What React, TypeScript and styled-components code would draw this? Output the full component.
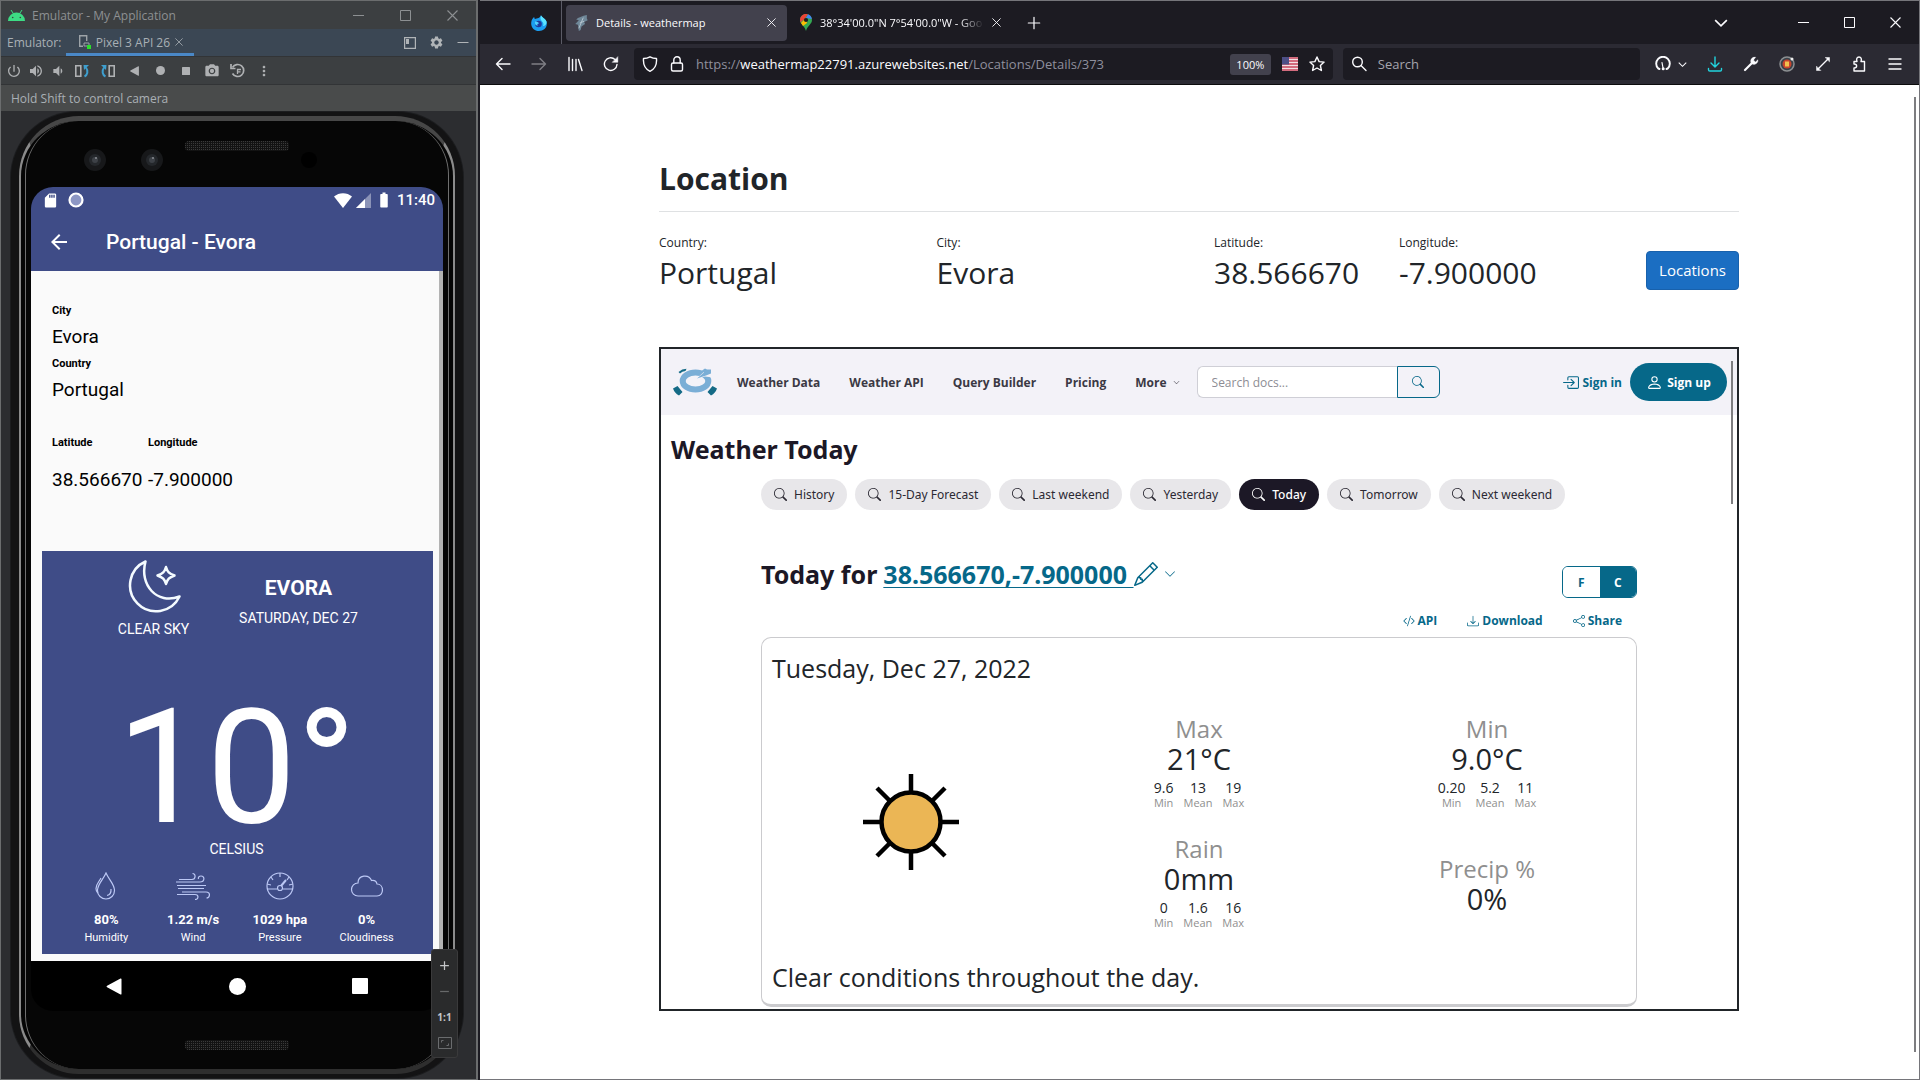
import React from "react";
import styled, { createGlobalStyle } from "styled-components";
import {
  BsSearch,
  BsPencil,
  BsCodeSlash,
  BsDownload,
  BsShare,
  BsBoxArrowInRight,
  BsPerson,
  BsChevronDown,
} from "react-icons/bs";
import {
  MdPowerSettingsNew,
  MdVolumeUp,
  MdVolumeDown,
  MdPhotoCamera,
  MdMoreVert,
  MdSettings,
  MdArrowBack,
  MdSdCard,
  MdBatteryFull,
  MdAdd,
  MdRemove,
} from "react-icons/md";

const ui = `"Open Sans", "Noto Sans", sans-serif`;
const heading = `"Noto Sans", "Open Sans", sans-serif`;
const teal = "#066889";
const indigo = "#3f4c87";

const Global = createGlobalStyle`
  *, *::before, *::after { box-sizing: border-box; }
  html, body { margin: 0; height: 100%; }
  body { background: #1c1b22; font-family: ${ui}; overflow: hidden; }
  #root { height: 100%; }
  button, input { font: inherit; color: inherit; margin: 0; padding: 0; border: 0; background: none; }
  button { display: inline-flex; align-items: center; justify-content: center; cursor: pointer; }
  h1, h2, h3, p, dl, dt, dd { margin: 0; font-weight: inherit; }
  svg { flex: none; display: block; }
`;

const Desktop = styled.div`
  display: grid;
  grid-template-columns: 1fr 3fr;
  height: 100vh;
`;

/* ---------- Emulator window ---------- */

const EmulatorWindow = styled.section`
  display: flex;
  flex-direction: column;
  margin-right: 2px;
  border: 1px solid #6b6d6e;
  border-right-width: 2px;
  background: #2c2d30;
  color: #a9b0b5;
  font-size: 12px;
  min-width: 0;
`;

const TitleBar = styled.header`
  display: flex;
  align-items: center;
  height: 28px;
  padding: 0 18px 0 7px;
  background: #3c3f41;
  color: #8d9092;
`;

const TitleText = styled.span`
  flex: 1;
  margin-left: 7px;
`;

const WindowButtons = styled.div<{ $gap: number }>`
  display: flex;
  align-items: center;
  gap: ${(p) => p.$gap}px;
`;

const EmulatorTabs = styled.div`
  display: flex;
  align-items: center;
  height: 27px;
  padding: 0 7px 0 6px;
  background: #3b4754;
`;

const DeviceTab = styled.button`
  height: 27px;
  width: 128px;
  margin-left: 5px;
  padding: 2px 0 0;
  gap: 5px;
  border-bottom: 3px solid #4a88c7;
`;

const TabTools = styled.div`
  display: flex;
  align-items: center;
  gap: 13px;
  margin-left: auto;
  color: #b0b4b7;
`;

const DeviceTools = styled.div`
  display: flex;
  align-items: center;
  height: 29px;
  padding: 0 2px;
  background: #3c3f41;
  border-top: 1px solid #323436;
  border-bottom: 1px solid #323436;
  color: #afb1b3;
`;

const ToolButton = styled.button<{ $narrow?: boolean }>`
  width: ${(p) => (p.$narrow ? 22 : 26)}px;
  height: 20px;
`;

const Hint = styled.div`
  height: 26px;
  padding-left: 10px;
  line-height: 28px;
  background: #494b4b;
`;

const DeviceArea = styled.div`
  position: relative;
  flex: 1;
  display: flex;
  min-height: 0;
  padding: 1px 13px 1px 10px;
`;

const PhoneShell = styled.div`
  flex: 1;
  display: flex;
  min-width: 0;
  padding: 4px 8px;
  border-radius: 66px;
  background: #131314;
  box-shadow: 0 0 0 1px #1c1d1f;
`;

const PhoneRim = styled.div`
  flex: 1;
  display: flex;
  min-width: 0;
  padding: 0 4px;
  border: solid #8b8b8b;
  border-width: 5px 2px;
  border-top-color: #474747;
  border-bottom-color: #2e2e2e;
  border-radius: 60px;
  background: #050505;
`;

const PhoneFace = styled.div`
  flex: 1;
  display: flex;
  flex-direction: column;
  min-width: 0;
  padding: 0 5px;
  border: solid #6f6f6f;
  border-width: 0 1px;
  border-radius: 54px;
  background: #060606;
`;

const Hardware = styled.svg`
  width: 100%;
`;

const Screen = styled.div`
  flex: 1;
  display: flex;
  flex-direction: column;
  min-height: 0;
  overflow: hidden;
  border-radius: 22px;
  background: #000;
  font-family: Roboto, sans-serif;
  color: #fff;
`;

const StatusBar = styled.div`
  display: flex;
  align-items: center;
  gap: 9px;
  height: 26px;
  padding: 0 8px 0 11px;
  background: ${indigo};
  font-size: 15px;
  font-weight: 500;
`;

const Signals = styled.div`
  display: flex;
  align-items: center;
  gap: 4px;
  margin-left: auto;
`;

const AppBar = styled.div`
  display: flex;
  align-items: center;
  gap: 35px;
  height: 58px;
  padding: 0 16px;
  background: ${indigo};
`;

const AppTitle = styled.h1`
  font-size: 21px;
  font-weight: 500;
`;

const AppBody = styled.div`
  flex: 1;
  min-height: 0;
  padding: 30px 6px 6px 11px;
  background: #fafafa;
  border-right: 4px solid #b3b3b3;
  color: #000;
`;

const PhoneDetails = styled.dl`
  padding: 0 10px;
`;

const PhoneLabel = styled.dt`
  font-size: 11px;
  font-weight: 700;
  line-height: 19px;
`;

const PhoneValue = styled.dd`
  font-size: 19px;
  line-height: 34px;
`;

const Coordinates = styled.div`
  display: grid;
  grid-template-columns: 96px 1fr;
  row-gap: 11px;
  margin: 26px 0 54px;
`;

const ForecastCard = styled.section`
  background: ${indigo};
  color: #fff;
  height: 403px;
  padding: 8px 23px 0 21px;
  font-size: 14px;
  text-align: center;
`;

const ForecastTop = styled.div`
  display: grid;
  grid-template-columns: 1fr 1fr;
  padding: 0 39px 0 18px;
`;

const Sky = styled.div`
  display: flex;
  flex-direction: column;
  align-items: center;
  line-height: 22px;
  gap: 5px;
`;

const Place = styled.div`
  padding-top: 14px;
  line-height: 30px;
  white-space: nowrap;
`;

const PlaceName = styled.h2`
  font-size: 21px;
  font-weight: 700;
`;

const Temperature = styled.p`
  margin-top: 57px;
  font-size: 160px;
  line-height: 142px;
`;

const Unit = styled.p`
  line-height: 20px;
`;

const Readings = styled.div`
  display: grid;
  grid-template-columns: repeat(4, 1fr);
  margin-top: 13px;
`;

const Reading = styled.div`
  display: flex;
  flex-direction: column;
  align-items: center;
  font-size: 11px;
  line-height: 18px;
`;

const ReadingValue = styled.strong`
  margin-top: 11px;
  font-size: 13px;
`;

const NavBar = styled.nav`
  display: flex;
  align-items: center;
  justify-content: space-between;
  height: 50px;
  padding: 0 75px;
`;

const ZoomControls = styled.div`
  position: absolute;
  right: 18px;
  bottom: 21px;
  width: 27px;
  display: grid;
  grid-template-rows: repeat(4, 26px);
  padding: 2px 0 1px;
  border-radius: 3px;
  border: 1px solid #3a3a3b;
  background: #2a2b2c;
  color: #c4c6c8;
  font-size: 10px;
  font-weight: 700;
`;

/* ---------- Browser window ---------- */

const BrowserWindow = styled.section`
  display: flex;
  flex-direction: column;
  min-width: 0;
  border: 1px solid #75757a;
  border-left: 0;
  background: #fff;
  color: #fbfbfe;
`;

const TabStrip = styled.header`
  display: flex;
  align-items: center;
  height: 43px;
  padding-right: 18px;
  background: #1c1b22;
  font-size: 11px;
`;

const PinnedTab = styled.button`
  width: 82px;
  height: 43px;
  padding-left: 36px;
  border-right: 1px solid #5b5b66;
`;

const BrowserTab = styled.div<{ $active?: boolean }>`
  display: flex;
  align-items: center;
  gap: 8px;
  width: 221px;
  height: 36px;
  margin-left: 4px;
  padding: 0 11px 0 9px;
  border-radius: 4px;
  background: ${(p) => (p.$active ? "#42414d" : "transparent")};
`;

const TabLabel = styled.span<{ $fade?: boolean }>`
  flex: 1;
  white-space: nowrap;
  mask-image: ${(p) => (p.$fade ? "linear-gradient(to right, #000 85%, transparent)" : "none")};
`;

const TabActions = styled.div`
  flex: 1;
  display: flex;
  align-items: center;
  justify-content: space-between;
  margin-left: 15px;
`;

const TabsEnd = styled.div`
  display: flex;
  align-items: center;
  gap: 70px;
`;

const Toolbar = styled.div`
  display: flex;
  align-items: center;
  height: 41px;
  padding: 0 16px 0 15px;
  background: #2b2a33;
  border-bottom: 1px solid #0c0c0d;
  font-size: 13px;
`;

const NavButtons = styled.div`
  display: flex;
  gap: 20px;
  margin-right: 15px;
`;

const Field = styled.div<{ $wide?: boolean }>`
  display: flex;
  align-items: center;
  gap: 11px;
  flex: ${(p) => (p.$wide ? 17 : 7)} 1 0;
  min-width: 0;
  height: 32px;
  padding: 0 8px;
  margin-right: 10px;
  border-radius: 4px;
  background: #1c1b22;
`;

const Address = styled.div`
  flex: 1;
  overflow: hidden;
  white-space: nowrap;
  color: #8f8f9d;
  outline: 0;
`;

const Host = styled.span`
  color: #fbfbfe;
`;

const ZoomLevel = styled.button`
  width: 41px;
  height: 21px;
  border-radius: 3px;
  background: #42414d;
  font-size: 11px;
`;

const BrowserSearch = styled.input`
  flex: 1;
  min-width: 0;
  outline: 0;
  &::placeholder { color: #a5a5ae; opacity: 1; }
`;

const Extensions = styled.div`
  display: flex;
  align-items: center;
  gap: 20px;
  margin-left: 5px;
`;

const GaugeGroup = styled.div`
  display: flex;
  align-items: center;
  justify-content: space-between;
  width: 32px;
`;

const PageArea = styled.div`
  flex: 1;
  display: flex;
  min-height: 0;
  padding: 12px 3px 27px 4px;
  color: #212529;
`;

const Page = styled.main`
  width: 90%;
  max-width: 1080px;
  margin: 0 auto;
  padding-top: 60px;
`;

const Scrollbar = styled.div<{ $height: string }>`
  width: 2px;
  height: ${(p) => p.$height};
  background: #7d7d80;
`;

const Heading = styled.h1`
  padding-bottom: 10px;
  border-bottom: 1px solid #dfe1e3;
  font-size: 30px;
  font-weight: 700;
  line-height: 44px;
`;

const LocationRow = styled.div`
  display: grid;
  grid-template-columns: repeat(12, 1fr);
  column-gap: 30px;
  padding-top: 21px;
`;

const LocationItem = styled.dl<{ $span: number }>`
  grid-column: span ${(p) => p.$span};
`;

const ItemLabel = styled.dt`
  font-size: 12px;
  line-height: 20px;
`;

const ItemValue = styled.dd`
  font-size: 30px;
  line-height: 40px;
  white-space: nowrap;
`;

const LocationsLink = styled.a`
  grid-column: span 2;
  justify-self: end;
  align-self: end;
  padding: 0 12px;
  margin-bottom: 3px;
  border: 1px solid #1861ac;
  border-radius: 4px;
  background: #1b6ec2;
  color: #fff;
  font-size: 15px;
  line-height: 37px;
  text-decoration: none;
`;

const Widget = styled.section`
  margin-top: 54px;
  padding-bottom: 2px;
  border: 2px solid #212529;
`;

const WidgetHeader = styled.header`
  display: flex;
  align-items: center;
  height: 66px;
  padding: 0 0 0 12px;
  background: #f3f2f8;
  color: #3b3944;
  font-size: 12px;
  font-weight: 700;
  white-space: nowrap;
`;

const WidgetNav = styled.nav`
  display: flex;
  gap: 29px;
  margin: 0 17px 0 20px;
`;

const NavItem = styled.a`
  display: inline-flex;
  align-items: center;
  gap: 6px;
  color: inherit;
  text-decoration: none;
`;

const DocsSearch = styled.form`
  display: flex;
  width: 243px;
  height: 32px;
  font-weight: 400;
`;

const DocsInput = styled.input`
  flex: 1;
  min-width: 0;
  padding-left: 14px;
  border: 1px solid #cfcfd6;
  border-right: 0;
  border-radius: 6px 0 0 6px;
  background: #fff;
  outline: 0;
  &::placeholder { color: #8d8d94; opacity: 1; }
`;

const DocsButton = styled.button`
  width: 43px;
  border: 1px solid ${teal};
  border-radius: 0 6px 6px 0;
  color: ${teal};
`;

const SignIn = styled.a`
  display: inline-flex;
  align-items: center;
  gap: 3px;
  margin-left: auto;
  color: ${teal};
  text-decoration: none;
`;

const SignUp = styled.button`
  gap: 4px;
  width: 97px;
  height: 38px;
  margin: 0 4px 0 8px;
  border-radius: 19px;
  background: ${teal};
  color: #fff;
`;

const WidgetScroll = styled.div`
  align-self: flex-end;
  width: 2px;
  height: 54px;
  margin-right: 4px;
  background: #7d7d80;
`;

const TitleRow = styled.div`
  display: flex;
  justify-content: space-between;
  padding: 0 4px 0 10px;
`;

const WidgetTitle = styled.h2`
  padding-top: 17px;
  font-family: ${heading};
  font-size: 25px;
  font-weight: 700;
  line-height: 34px;
  color: #1c1826;
`;

const Results = styled.div`
  margin-top: -25px;
  padding: 0 100px;
`;

const Chips = styled.div`
  display: flex;
  gap: 8px;
`;

const Chip = styled.button<{ $active?: boolean }>`
  gap: 7px;
  height: 31px;
  padding: 0 13px;
  border-radius: 16px;
  background: ${(p) => (p.$active ? "#1c1826" : "#e8e7ea")};
  color: ${(p) => (p.$active ? "#fff" : "#2b2933")};
  font-size: 12px;
  font-family: ${heading};
  font-weight: ${(p) => (p.$active ? 500 : 400)};
  white-space: nowrap;
`;

const QueryRow = styled.div`
  display: flex;
  justify-content: space-between;
  height: 41px;
  margin-top: 47px;
`;

const QueryTitle = styled.h3`
  display: flex;
  align-items: center;
  gap: 6px;
  height: 34px;
  color: #1c1826;
  font-family: ${heading};
  font-size: 25px;
  font-weight: 700;
  white-space: pre;
`;

const QueryLink = styled.a`
  display: inline-flex;
  align-items: center;
  color: ${teal};
  text-underline-offset: 3px;
  text-decoration-thickness: 1px;
`;

const UnitSwitch = styled.div`
  display: grid;
  grid-template-columns: 1fr 1fr;
  align-self: flex-end;
  width: 75px;
  height: 32px;
  border: 1px solid ${teal};
  border-radius: 6px;
  overflow: hidden;
  font-size: 12px;
  font-weight: 700;
`;

const UnitButton = styled.button<{ $active?: boolean }>`
  background: ${(p) => (p.$active ? teal : "#fff")};
  color: ${(p) => (p.$active ? "#fff" : teal)};
`;

const Actions = styled.div`
  display: flex;
  justify-content: flex-end;
  gap: 30px;
  margin: 13px 15px 6px;
  color: ${teal};
  font-size: 12px;
  font-weight: 700;
  line-height: 20px;
`;

const Action = styled.button`
  gap: 3px;
`;

const DayCard = styled.article`
  padding: 13px 5px 9px;
  border: 1px solid #cbcbce;
  border-bottom-width: 3px;
  border-radius: 10px;
`;

const CardText = styled.p`
  padding-left: 5px;
  font-size: 25px;
  line-height: 35px;
`;

const DayGrid = styled.div`
  display: grid;
  grid-template-columns: repeat(3, 1fr);
  grid-template-rows: 100px 100px;
  row-gap: 20px;
  margin: 28px 0 26px;
`;

const SunCell = styled.div`
  grid-row: span 2;
  display: flex;
  align-items: center;
  justify-content: center;
  padding-bottom: 4px;
`;

const Stat = styled.div`
  align-self: center;
  display: flex;
  flex-direction: column;
  align-items: center;
`;

const StatName = styled.div`
  color: #8f8f8f;
  font-size: 24px;
  line-height: 30px;
`;

const StatValue = styled.div`
  font-size: 29px;
  line-height: 30px;
`;

const MiniStats = styled.div`
  display: flex;
  gap: 10px;
  padding: 5px 0;
`;

const Mini = styled.div`
  display: flex;
  flex-direction: column;
  align-items: center;
  font-size: 14px;
  line-height: 18px;
`;

const MiniLabel = styled.span`
  color: #8f8f8f;
  font-size: 11px;
  line-height: 12px;
`;

/* ---------- Drawings ---------- */

type Sized = { size?: number };

const Minus = ({ size = 11 }: Sized) => (
  <svg width={size} height="11" viewBox="0 0 11 11" stroke="currentColor"><path d="M0 5.5h11" /></svg>
);
const Square = ({ size = 11 }: Sized) => (
  <svg width={size} height={size} viewBox="0 0 11 11" fill="none" stroke="currentColor"><path d="M.5.5h10v10H.5z" /></svg>
);
const Cross = ({ size = 11 }: Sized) => (
  <svg width={size} height={size} viewBox="0 0 11 11" fill="none" stroke="currentColor" strokeWidth="1.1"><path d="M.5.5l10 10M10.5.5l-10 10" /></svg>
);
const Chevron = ({ size = 12 }: Sized) => (
  <svg width={size} height={size} viewBox="0 0 12 12" fill="none" stroke="currentColor" strokeWidth="1.4"><path d="M1 3.5l5 5 5-5" /></svg>
);
const Droid = () => (
  <svg width="17" height="11" viewBox="0 0 17 11" fill="#3ddc84">
    <path d="M3 0l2 3M14 0l-2 3" stroke="#3ddc84" />
    <path d="M0 11a8.5 8.5 0 0 1 17 0z" />
    <circle cx="4.7" cy="7.5" r=".8" fill="#3c3f41" /><circle cx="12.3" cy="7.5" r=".8" fill="#3c3f41" />
  </svg>
);
const DeviceIcon = () => (
  <svg width="13" height="14" viewBox="0 0 13 14" fill="none" stroke="#9da3a8" strokeWidth="1.4">
    <path d="M5 11.3H1.7V.7h7V6" /><path d="M6 8h5v3H6z" strokeWidth="1" /><rect x="9" y="10" width="4" height="4" fill="#2be02b" stroke="none" />
  </svg>
);
const Rotate = ({ flip }: { flip?: boolean }) => (
  <svg width="16" height="14" viewBox="0 0 16 14" fill="none" transform={flip ? "scale(-1 1)" : undefined}>
    <path d="M1.8 1.8h5v10.4h-5z" stroke="#afb1b3" strokeWidth="1.6" />
    <path d="M10.500 12.500c3-1.500 4-5.500 1.500-9" stroke="#3e9fcf" strokeWidth="2" /><path d="M9.500 1h5.500l-5 5z" fill="#3e9fcf" />
  </svg>
);
const BackTriangle = ({ size = 9 }: Sized) => (
  <svg width={size} height={size + 1} viewBox="0 0 15 17" fill="currentColor"><path d="M14 .5a.8.8 0 0 1 1 .8v14.400a.8.8 0 0 1-1 .8L.6 9.300a.9.9 0 0 1 0-1.600z" /></svg>
);
const Dot = ({ size = 9 }: Sized) => (
  <svg width={size} height={size} viewBox="0 0 10 10" fill="currentColor"><circle cx="5" cy="5" r="5" /></svg>
);
const Stop = ({ size = 8 }: Sized) => (
  <svg width={size} height={size} viewBox="0 0 16 16" fill="currentColor"><rect width="16" height="16" rx="1" /></svg>
);
const Snapshots = () => (
  <svg width="16" height="15" viewBox="0 0 16 15" fill="none" stroke="currentColor" strokeWidth="1.7">
    <path d="M2.500 4.500A6 6 0 1 1 2.500 10.500" /><path d="M1 1v4.500h4.500" /><path d="M7.500 11V6.500H11M8 8.800h2.500" strokeWidth="1.300" />
  </svg>
);
const Dock = () => (
  <svg width="12" height="12" viewBox="0 0 12 12" fill="none" stroke="currentColor" strokeWidth="1.2"><path d="M.6.6h10.800v10.800H.6z" /><path d="M2 2h3v5H2z" fill="currentColor" stroke="none" /></svg>
);
const Wifi = () => (
  <svg width="18" height="15" viewBox="0 0 18 15" fill="#fff"><path d="M9 15L0 3.500C5-1 13-1 18 3.500z" /></svg>
);
const Cell = () => (
  <svg width="15" height="15" viewBox="0 0 15 15" fill="#fff"><path d="M15 0v15H0z" opacity=".4" /><path d="M9 6v9H0z" /></svg>
);
const Ring = () => (
  <svg width="16" height="16" viewBox="0 0 16 16"><circle cx="8" cy="8" r="6.500" fill="#8d97c4" stroke="#fff" strokeWidth="2.200" /></svg>
);
const PhoneTop = () => (
  <Hardware viewBox="0 0 412 66">
    <defs>
      <pattern id="mesh" width="2" height="2" patternUnits="userSpaceOnUse"><rect width="2" height="2" fill="#121212" /><rect width="1" height="1" fill="#3a3a3a" /></pattern>
    </defs>
    {[64, 121].map((x) => (
      <g key={x}><circle cx={x} cy="39" r="11" fill="#17181a" /><circle cx={x} cy="39" r="6" fill="#24272b" /><circle cx={x} cy="39" r="3" fill="#3d4147" /><circle cx={x + 1} cy="37" r="1" fill="#8a8d92" /></g>
    ))}
    <rect x="154" y="20" width="104" height="10" rx="4" fill="url(#mesh)" />
    <circle cx="278" cy="39" r="8" fill="#000" />
  </Hardware>
);
const PhoneBottom = () => (
  <Hardware viewBox="0 0 412 58"><rect x="154" y="29" width="104" height="10" rx="4" fill="url(#mesh)" /></Hardware>
);
const Moon = () => (
  <svg width="54" height="54" viewBox="0 -1 54 54" fill="none" stroke="#f4fbff" strokeWidth="2.500" strokeLinejoin="round">
    <path d="M18.500 1.500A26 26 0 1 0 52.500 36.500C30 45 12 25 18.500 1.500z" />
    <path d="M39 7c1.500 5 3 6.500 8.500 8.500-5.500 2-7 3.500-8.500 8.500-1.500-5-3-6.500-8.500-8.500 5.500-2 7-3.500 8.500-8.500z" />
  </svg>
);
const readingIcon = { width: 34, height: 28, viewBox: "0 0 34 28", fill: "none", stroke: "#bcc8f5", strokeWidth: 1.2 };
const Drops = () => (
  <svg {...readingIcon}>
    <path d="M17 1c3 7 8.500 11 8.500 17.500a8.500 8.500 0 0 1-17 0C8.500 12 14 8 17 1z" />
    <path d="M12 6c-2 4-5 6-5 10.500 0 2 .7 3.500 1.800 4.500M22 17c.3 3.500-1.500 6-4 6.500" />
  </svg>
);
const Wind = () => (
  <svg {...readingIcon}>
    <path d="M3 7.500h13c4 0 4-6 .5-6M0 10h24c5 0 5-6 1-6-2 0-3 1.500-2.500 3M1 13.500h29M2 16.500h26M6 20h24c5 0 4 6 .5 6M1 22.500h18c4 0 4 5 0 5" />
  </svg>
);
const Gauge = () => (
  <svg {...readingIcon}>
    <circle cx="17" cy="14" r="13" /><path d="M4 17h10M20 17h10M17 1v4M8 5l2 3M26 5l-2 3M4 12l4 1M30 12l-4 1" /><circle cx="17" cy="16" r="2.500" /><path d="M18 14l5-6" strokeWidth="2" />
  </svg>
);
const Cloud = () => (
  <svg {...readingIcon}>
    <path d="M8 24a6.500 6.500 0 0 1 0-13C8 2.500 19 2 21.500 8.500c3-.5 5 1 5.500 3.500 7 0 7.500 12 0 12z" />
  </svg>
);
const FitIcon = () => (
  <svg width="14" height="12" viewBox="0 0 14 12" fill="none" stroke="#6a6c6e"><path d="M.5.5h13v11H.5zM3.500 5.500v-2h2M10.500 6.500v2h-2" /></svg>
);

const FirefoxLogo = () => (
  <svg width="16" height="16" viewBox="0 0 16 16">
    <path d="M10 0c0 2 4 3 5.500 6.500C17 12 13 16 8 16S-.5 12 .3 7C.6 4.500 2 3 3.200 2c0 1 .3 1.600.8 2C6 3.500 9.500 3 10 0z" fill="#1b9df0" />
    <path d="M10 0c0 2 4 3 5.500 6.500C16 9 14 11 12 11c2-4-3-5-2.500-8z" fill="#5be4ff" />
    <circle cx="7.500" cy="9" r="3.300" fill="#20399c" /><path d="M4 6.500c2 0 3.500.5 4 2-2 0-2 1-1 2-2 .5-3.500-1-3-4z" fill="#4fd2ff" />
  </svg>
);
const Feather = () => (
  <svg width="13" height="16" viewBox="0 0 14 18">
    <path d="M13 0C8 1 3 3 1 5l3 1-4 4 3 1 1 7 2-1 1-4 4-3-1-2 4-2-1-2z" fill="#6f8798" />
    <path d="M4 15l5-12M5 9l5-2" stroke="#b9c9d3" fill="none" />
  </svg>
);
const MapsPin = () => (
  <svg width="12" height="17" viewBox="0 0 12 17">
    <path d="M6 0a6 6 0 0 1 6 6c0 4-4.500 5.500-6 11C4.500 11.500 0 10 0 6a6 6 0 0 1 6-6z" fill="#34a853" />
    <path d="M1.500 2A6 6 0 0 1 8 .3L3 7z" fill="#ea4335" /><path d="M8 .3A6 6 0 0 1 11.800 5L6 4z" fill="#4285f4" /><path d="M1 9l5-5 1 5-4 3z" fill="#fbbc04" /><path d="M1.500 2L4 5 .6 8.500C-.4 6 0 3.500 1.500 2z" fill="#ea4335" /><circle cx="6" cy="6" r="2.100" fill="#1c1b22" />
  </svg>
);
const line16 = { width: 16, height: 16, viewBox: "0 0 16 16", fill: "none", stroke: "currentColor", strokeWidth: 1.4, strokeLinecap: "round" as const, strokeLinejoin: "round" as const };
const Plus = () => <svg {...line16} width="14" height="14"><path d="M8 1.500v13M1.500 8h13" /></svg>;
const ArrowLeft = () => <svg {...line16}><path d="M15 8H1.500M7 2.500L1.500 8 7 13.500" /></svg>;
const ArrowRight = () => <svg {...line16} opacity=".4"><path d="M1 8h13.500M9 2.500L14.500 8 9 13.500" /></svg>;
const Library = () => <svg {...line16}><path d="M2 1.500v13M5.500 3.500v11M9 3.500v11M11.500 3.500l3.500 11" /></svg>;
const Reload = () => <svg {...line16}><path d="M14 8.500A6.300 6.300 0 1 1 12 3.500l2 1.500" /><path d="M14.800 1v5.300H9.500z" fill="currentColor" strokeWidth=".5" /></svg>;
const Shield = () => <svg {...line16}><path d="M8 .8c2 1.200 4 1.700 6.500 1.700C15 8.500 13 13 8 15.300 3 13 1 8.500 1.500 2.500 4 2.500 6 2 8 .8z" /></svg>;
const Lock = () => <svg {...line16}><rect x="2.500" y="7" width="11" height="8" rx="1.500" /><path d="M4.800 7V4a3.200 3.200 0 0 1 6.400 0v3" /></svg>;
const Star = () => <svg {...line16}><path d="M8 1l2.100 4.600 5 .5-3.700 3.400 1 5L8 12l-4.400 2.500 1-5L.9 6.100l5-.5z" /></svg>;
const Magnifier = () => <svg {...line16}><circle cx="6.500" cy="6" r="4.800" /><path d="M10 9.500l5 5" /></svg>;
const Flag = () => (
  <svg width="16" height="14" viewBox="0 0 16 14"><rect width="16" height="14" fill="#f3dfe3" /><path d="M0 1h16M0 4h16M0 7h16M0 10h16M0 13h16" stroke="#c8455c" strokeWidth="1.600" /><rect width="7" height="7.500" fill="#4d4f86" /></svg>
);
const SpeedGauge = () => <svg {...line16} strokeWidth="1.900"><path d="M3.300 12.500A6.800 6.800 0 1 1 12.700 12.500l-1.200.5M3.300 12.500l1.200.5" /><path d="M7 6.500l1 5.500" strokeWidth="1.200" /><circle cx="8.200" cy="12.800" r="1.500" fill="currentColor" stroke="none" /></svg>;
const DownloadArrow = () => <svg {...line16} stroke="#22d3dd"><path d="M8 1v9.500M4 7l4 4 4-4M1.500 12.500v1.200c0 .8.500 1.300 1.300 1.300h10.400c.8 0 1.300-.5 1.300-1.300v-1.200" /></svg>;
const Wrench = () => <svg {...line16}><path d="M2 14l7-7" strokeWidth="2.200" /><path d="M12.500 1.200a4 4 0 0 0-4.700 4.900c.3 1.200 1.200 2 2.300 2.200a4 4 0 0 0 4.800-4.500l-2.400 2.100-1.900-1.700z" fill="currentColor" strokeWidth=".4" /></svg>;
const Ball = () => <svg width="16" height="16" viewBox="0 0 16 16"><circle cx="8" cy="8" r="7" fill="#38424a" stroke="#8c8f92" strokeWidth="1.500" /><circle cx="8" cy="8" r="4.500" fill="#c8452e" /><path d="M6 5.500h4v5H6z" fill="#f2c14e" /><circle cx="13" cy="3" r="1.500" fill="#eee" /></svg>;
const Expand = () => <svg {...line16}><path d="M3 13L13 3" /><path d="M10.500 1.500h4v4zM1.500 10.500v4h4z" fill="currentColor" strokeWidth=".5" /></svg>;
const Puzzle = () => <svg {...line16}><path d="M3 5.500h3C5 3 6 1 8 1s3 2 2 4.500h3.500V15H3v-3c3.500 0 3.500-4 0-4z" /></svg>;
const Menu = () => <svg {...line16}><path d="M2 3h12M2 8h12M2 13h12" /></svg>;

const WeatherLogo = () => (
  <svg width="44" height="28" viewBox="0 0 44 28">
    <ellipse cx="22.500" cy="13" rx="12.800" ry="8.600" fill="none" stroke="#7aaed6" strokeWidth="6" />
    <path d="M23 11L33 2l7-1v8.500l-8-1z" fill="#f3f2f8" />
    <path d="M24 10.500L31 4.500 29 2.500l3-2 2 1L38 1.500v4l-5 2z" fill="#7aaed6" />
    <path d="M5.500 4Q9 .8 13.500.8L12.500 3Q9 3 7 5.500zM0 20.500l4.500-2.500 5 6-3.500 3.500Q1.500 25 0 20.500zM44 20.500L39.500 18l-5 6 3.500 3.500Q42.500 25 44 20.500z" fill="#146a86" />
  </svg>
);
const Sun = () => (
  <svg width="98" height="98" viewBox="0 0 98 98">
    <g stroke="#000" strokeWidth="4.500"><path d="M49 1v96M1 49h96M15 15l68 68M83 15L15 83" /></g>
    <circle cx="49" cy="49" r="29.500" fill="#ebb655" stroke="#000" strokeWidth="4.500" />
  </svg>
);

/* ---------- Content ---------- */

const readings = [
  { icon: <Drops />, value: "80%", label: "Humidity" },
  { icon: <Wind />, value: "1.22 m/s", label: "Wind" },
  { icon: <Gauge />, value: "1029 hpa", label: "Pressure" },
  { icon: <Cloud />, value: "0%", label: "Cloudiness" },
];
const location = [
  { label: "Country:", value: "Portugal", span: 3 },
  { label: "City:", value: "Evora", span: 3 },
  { label: "Latitude:", value: "38.566670", span: 2 },
  { label: "Longitude:", value: "-7.900000", span: 2 },
];
const periods = ["History", "15-Day Forecast", "Last weekend", "Yesterday", "Today", "Tomorrow", "Next weekend"];
const stats: { name: string; value: string; range?: string[] }[] = [
  { name: "Max", value: "21°C", range: ["9.6", "13", "19"] },
  { name: "Min", value: "9.0°C", range: ["0.20", "5.2", "11"] },
  { name: "Rain", value: "0mm", range: ["0", "1.6", "16"] },
  { name: "Precip %", value: "0%" },
];
const rangeLabels = ["Min", "Mean", "Max"];

function Emulator() {
  return (
    <EmulatorWindow>
      <TitleBar>
        <Droid />
        <TitleText>Emulator - My Application</TitleText>
        <WindowButtons $gap={36}>
          <button aria-label="Minimize"><Minus /></button>
          <button aria-label="Maximize"><Square /></button>
          <button aria-label="Close"><Cross /></button>
        </WindowButtons>
      </TitleBar>
      <EmulatorTabs>
        Emulator:
        <DeviceTab><DeviceIcon />Pixel 3 API 26<Cross size={8} /></DeviceTab>
        <TabTools>
          <button aria-label="Dock"><Dock /></button>
          <button aria-label="Settings"><MdSettings size={15} /></button>
          <button aria-label="Hide"><Minus size={12} /></button>
        </TabTools>
      </EmulatorTabs>
      <DeviceTools>
        <ToolButton $narrow aria-label="Power"><MdPowerSettingsNew size={16} /></ToolButton>
        <ToolButton $narrow aria-label="Volume up"><MdVolumeUp size={16} /></ToolButton>
        <ToolButton $narrow aria-label="Volume down"><MdVolumeDown size={16} /></ToolButton>
        <ToolButton aria-label="Rotate left"><Rotate /></ToolButton>
        <ToolButton aria-label="Rotate right"><Rotate flip /></ToolButton>
        <ToolButton aria-label="Back"><BackTriangle /></ToolButton>
        <ToolButton aria-label="Home"><Dot /></ToolButton>
        <ToolButton aria-label="Overview"><Stop /></ToolButton>
        <ToolButton aria-label="Screenshot"><MdPhotoCamera size={16} /></ToolButton>
        <ToolButton aria-label="Snapshots"><Snapshots /></ToolButton>
        <ToolButton aria-label="More"><MdMoreVert size={16} /></ToolButton>
      </DeviceTools>
      <Hint>Hold Shift to control camera</Hint>
      <DeviceArea>
        <PhoneShell>
          <PhoneRim>
            <PhoneFace>
              <PhoneTop />
              <Screen>
                <StatusBar>
                  <MdSdCard size={17} />
                  <Ring />
                  <Signals><Wifi /><Cell /><MdBatteryFull size={18} />11:40</Signals>
                </StatusBar>
                <AppBar>
                  <button aria-label="Navigate up"><MdArrowBack size={24} /></button>
                  <AppTitle>Portugal - Evora</AppTitle>
                </AppBar>
                <AppBody>
                  <PhoneDetails>
                    <PhoneLabel>City</PhoneLabel>
                    <PhoneValue>Evora</PhoneValue>
                    <PhoneLabel>Country</PhoneLabel>
                    <PhoneValue>Portugal</PhoneValue>
                    <Coordinates>
                      <PhoneLabel>Latitude</PhoneLabel>
                      <PhoneLabel>Longitude</PhoneLabel>
                      <PhoneValue>38.566670</PhoneValue>
                      <PhoneValue>-7.900000</PhoneValue>
                    </Coordinates>
                  </PhoneDetails>
                  <ForecastCard>
                    <ForecastTop>
                      <Sky><Moon />CLEAR SKY</Sky>
                      <Place><PlaceName>EVORA</PlaceName>SATURDAY, DEC 27</Place>
                    </ForecastTop>
                    <Temperature>10°</Temperature>
                    <Unit>CELSIUS</Unit>
                    <Readings>
                      {readings.map((r) => (
                        <Reading key={r.label}>{r.icon}<ReadingValue>{r.value}</ReadingValue>{r.label}</Reading>
                      ))}
                    </Readings>
                  </ForecastCard>
                </AppBody>
                <NavBar>
                  <button aria-label="Back"><BackTriangle size={16} /></button>
                  <button aria-label="Home"><Dot size={17} /></button>
                  <button aria-label="Recents"><Stop size={16} /></button>
                </NavBar>
              </Screen>
              <PhoneBottom />
            </PhoneFace>
          </PhoneRim>
        </PhoneShell>
        <ZoomControls>
          <button aria-label="Zoom in"><MdAdd size={15} /></button>
          <button aria-label="Zoom out"><MdRemove size={15} opacity={0.4} /></button>
          <button>1:1</button>
          <button aria-label="Zoom to fit"><FitIcon /></button>
        </ZoomControls>
      </DeviceArea>
    </EmulatorWindow>
  );
}

function WeatherWidget() {
  return (
    <Widget>
      <WidgetHeader>
        <WeatherLogo />
        <WidgetNav>
          <NavItem href="#data">Weather Data</NavItem>
          <NavItem href="#api">Weather API</NavItem>
          <NavItem href="#query">Query Builder</NavItem>
          <NavItem href="#pricing">Pricing</NavItem>
          <NavItem href="#more">More <BsChevronDown size={7} /></NavItem>
        </WidgetNav>
        <DocsSearch>
          <DocsInput aria-label="Search docs" placeholder="Search docs..." />
          <DocsButton type="button" aria-label="Search"><BsSearch size={12} /></DocsButton>
        </DocsSearch>
        <SignIn href="#signin"><BsBoxArrowInRight size={17} />Sign in</SignIn>
        <SignUp><BsPerson size={17} />Sign up</SignUp>
        <WidgetScroll />
      </WidgetHeader>
      <TitleRow>
        <WidgetTitle>Weather Today</WidgetTitle>
        <Scrollbar $height="89px" />
      </TitleRow>
      <Results>
        <Chips>
          {periods.map((p) => (
            <Chip key={p} $active={p === "Today"}><BsSearch size={13} />{p}</Chip>
          ))}
        </Chips>
        <QueryRow>
          <QueryTitle>
            <span>Today for</span>
            <QueryLink href="#location">{"38.566670,-7.900000 "}<BsPencil size={24} /></QueryLink>
            <BsChevronDown size={12} color={teal} />
          </QueryTitle>
          <UnitSwitch>
            <UnitButton>F</UnitButton>
            <UnitButton $active>C</UnitButton>
          </UnitSwitch>
        </QueryRow>
        <Actions>
          <Action><BsCodeSlash size={12} />API</Action>
          <Action><BsDownload size={12} />Download</Action>
          <Action><BsShare size={12} />Share</Action>
        </Actions>
        <DayCard>
          <CardText>Tuesday, Dec 27, 2022</CardText>
          <DayGrid>
            <SunCell><Sun /></SunCell>
            {stats.map((s) => (
              <Stat key={s.name}>
                <StatName>{s.name}</StatName>
                <StatValue>{s.value}</StatValue>
                {s.range && (
                  <MiniStats>
                    {s.range.map((v, i) => (
                      <Mini key={rangeLabels[i]}>{v}<MiniLabel>{rangeLabels[i]}</MiniLabel></Mini>
                    ))}
                  </MiniStats>
                )}
              </Stat>
            ))}
          </DayGrid>
          <CardText>Clear conditions throughout the day.</CardText>
        </DayCard>
      </Results>
    </Widget>
  );
}

function Browser() {
  return (
    <BrowserWindow>
      <TabStrip>
        <PinnedTab aria-label="Pinned tab"><FirefoxLogo /></PinnedTab>
        <BrowserTab $active><Feather /><TabLabel>Details - weathermap</TabLabel><button aria-label="Close tab"><Cross size={9} /></button></BrowserTab>
        <BrowserTab><MapsPin /><TabLabel $fade>38°34'00.0"N 7°54'00.0"W - Goo</TabLabel><button aria-label="Close tab"><Cross size={9} /></button></BrowserTab>
        <TabActions>
          <button aria-label="New tab"><Plus /></button>
          <TabsEnd>
            <button aria-label="List all tabs"><Chevron size={14} /></button>
            <WindowButtons $gap={35}>
              <button aria-label="Minimize"><Minus /></button>
              <button aria-label="Maximize"><Square /></button>
              <button aria-label="Close"><Cross /></button>
            </WindowButtons>
          </TabsEnd>
        </TabActions>
      </TabStrip>
      <Toolbar>
        <NavButtons>
          <button aria-label="Back"><ArrowLeft /></button>
          <button aria-label="Forward"><ArrowRight /></button>
          <button aria-label="Library"><Library /></button>
          <button aria-label="Reload"><Reload /></button>
        </NavButtons>
        <Field $wide>
          <Shield />
          <Lock />
          <Address role="textbox" aria-label="Address">
            https://<Host>weathermap22791.azurewebsites.net</Host>/Locations/Details/373
          </Address>
          <ZoomLevel>100%</ZoomLevel>
          <Flag />
          <button aria-label="Bookmark"><Star /></button>
        </Field>
        <Field>
          <Magnifier />
          <BrowserSearch aria-label="Search the web" placeholder="Search" />
        </Field>
        <Extensions>
          <GaugeGroup><button aria-label="Speed"><SpeedGauge /></button><Chevron size={9} /></GaugeGroup>
          <button aria-label="Downloads"><DownloadArrow /></button>
          <button aria-label="Developer tools"><Wrench /></button>
          <button aria-label="Extension"><Ball /></button>
          <button aria-label="Full screen"><Expand /></button>
          <button aria-label="Add-ons"><Puzzle /></button>
          <button aria-label="Menu"><Menu /></button>
        </Extensions>
      </Toolbar>
      <PageArea>
        <Page>
          <Heading>Location</Heading>
          <LocationRow>
            {location.map((l) => (
              <LocationItem key={l.label} $span={l.span}>
                <ItemLabel>{l.label}</ItemLabel>
                <ItemValue>{l.value}</ItemValue>
              </LocationItem>
            ))}
            <LocationsLink href="#locations">Locations</LocationsLink>
          </LocationRow>
          <WeatherWidget />
        </Page>
        <Scrollbar $height="100%" />
      </PageArea>
    </BrowserWindow>
  );
}

export default function App() {
  return (
    <Desktop>
      <Global />
      <Emulator />
      <Browser />
    </Desktop>
  );
}
